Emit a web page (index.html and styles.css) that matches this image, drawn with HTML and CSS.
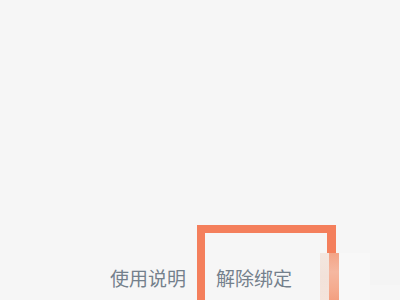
FILE: index.html
```html
<!DOCTYPE html>
<html lang="zh-CN">
<head>
    <meta charset="UTF-8">
    <meta name="viewport" content="width=device-width, initial-scale=1.0">
    <title>解除绑定</title>
    <link rel="stylesheet" href="styles.css">
</head>
<body>

    <div class="page">
        <!-- empty settings area -->
        <div class="content"></div>

        <!-- bottom links -->
        <div class="footer">
            <a class="footer-link">使用说明</a>
            <div class="highlight">
                <a class="footer-link">解除绑定</a>
            </div>

            <!-- blurred corner of the screenshot -->
            <div class="mosaic">
                <span class="m-pale"></span>
                <span class="m-salmon"></span>
                <span class="m-white"></span>
                <span class="m-grey"></span>
            </div>
        </div>
    </div>

</body>
</html>
```

FILE: styles.css
```css
/* Base Styling */
body {
    font-family: "Noto Sans CJK SC", "Noto Sans", sans-serif;
    background-color: #f6f6f6;
    margin: 0;
    padding: 0;
}
.page {
    height: 100vh;
    display: flex;
    flex-direction: column;
    overflow: hidden;
}
.content {
    flex: 1;
}

/* Footer links */
.footer {
    position: relative;
    display: flex;
    align-items: flex-end;
    gap: 11px;
    padding-left: 110px;
    height: 75px;
}
.footer-link {
    display: block;
    font-size: 19px;
    line-height: 26px;
    color: #74808c;
    padding-bottom: 9px;
}

/* Orange annotation box */
.highlight {
    box-sizing: border-box;
    width: 139px;
    height: 75px;
    border: 8px solid #f47f5c;
    border-right-width: 9px;
    border-bottom: none;
    padding: 32px 0 0 11px;
}
.highlight .footer-link {
    padding-bottom: 0;
}

/* Mosaic over the right edge */
.mosaic {
    position: absolute;
    left: 320px;
    top: 28px;
    right: 0;
    bottom: 0;
    display: flex;
}
.mosaic span {
    display: block;
    height: 100%;
}
.m-pale {
    width: 9px;
    background: linear-gradient(#f3e6df, #f2e2da 50%, #f4e4dc);
}
.m-salmon {
    width: 10px;
    background: linear-gradient(#f3a487, #f5b7a0 40%, #f5ab8f 75%, #f39f80);
}
.m-white {
    width: 31px;
    background: #f8f8f8;
}
.m-grey {
    flex: 1;
    margin: 7px 0 15px;
    height: auto !important;
    background: #f4f4f4;
}
```
